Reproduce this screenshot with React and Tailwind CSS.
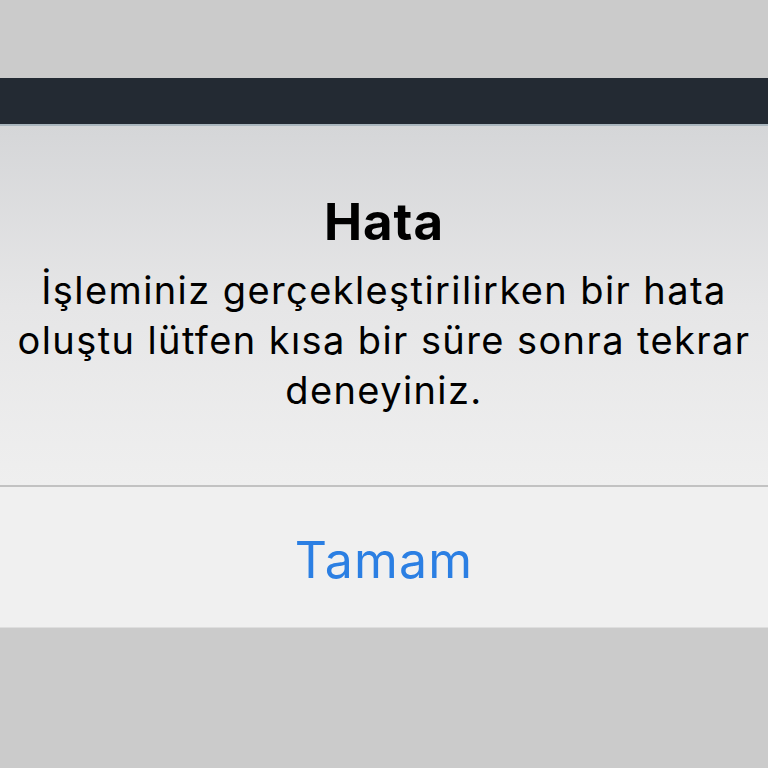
export default function App() {
  return (
    <div className="w-[768px] h-[768px] bg-[#cbcbcb] flex flex-col overflow-hidden" style={{ fontFamily: "Inter, 'Noto Sans', sans-serif" }}>
      <div className="h-[78px] shrink-0" />
      <div className="h-[48px] shrink-0 bg-[#232a33] border-b-2 border-[#aab6be]" />
      <div className="shrink-0 flex flex-col bg-[#f0f0f0]">
        <div className="h-[359px] flex flex-col items-center pt-[66px] bg-gradient-to-b from-[#d5d6d8] via-[#e6e6e7] to-[#efefef]">
          <div className="text-[51px] leading-[60px] font-bold text-black tracking-[1px]">Hata</div>
          <div className="mt-[13px] text-[38px] leading-[50px] text-black text-center tracking-[1.4px]">
            <div>İşleminiz gerçekleştirilirken bir hata</div>
            <div>oluştu lütfen kısa bir süre sonra tekrar</div>
            <div>deneyiniz.</div>
          </div>
        </div>
        <div className="h-[2px] bg-[#c2c2c2]" />
        <div className="h-[140px] flex justify-center pt-[43px]">
          <div className="text-[50px] leading-[60px] text-[#2b7fe3] tracking-[1.2px]">Tamam</div>
        </div>
      </div>
      <div className="h-[1px] bg-[#dedede] shrink-0" />
    </div>
  );
}
